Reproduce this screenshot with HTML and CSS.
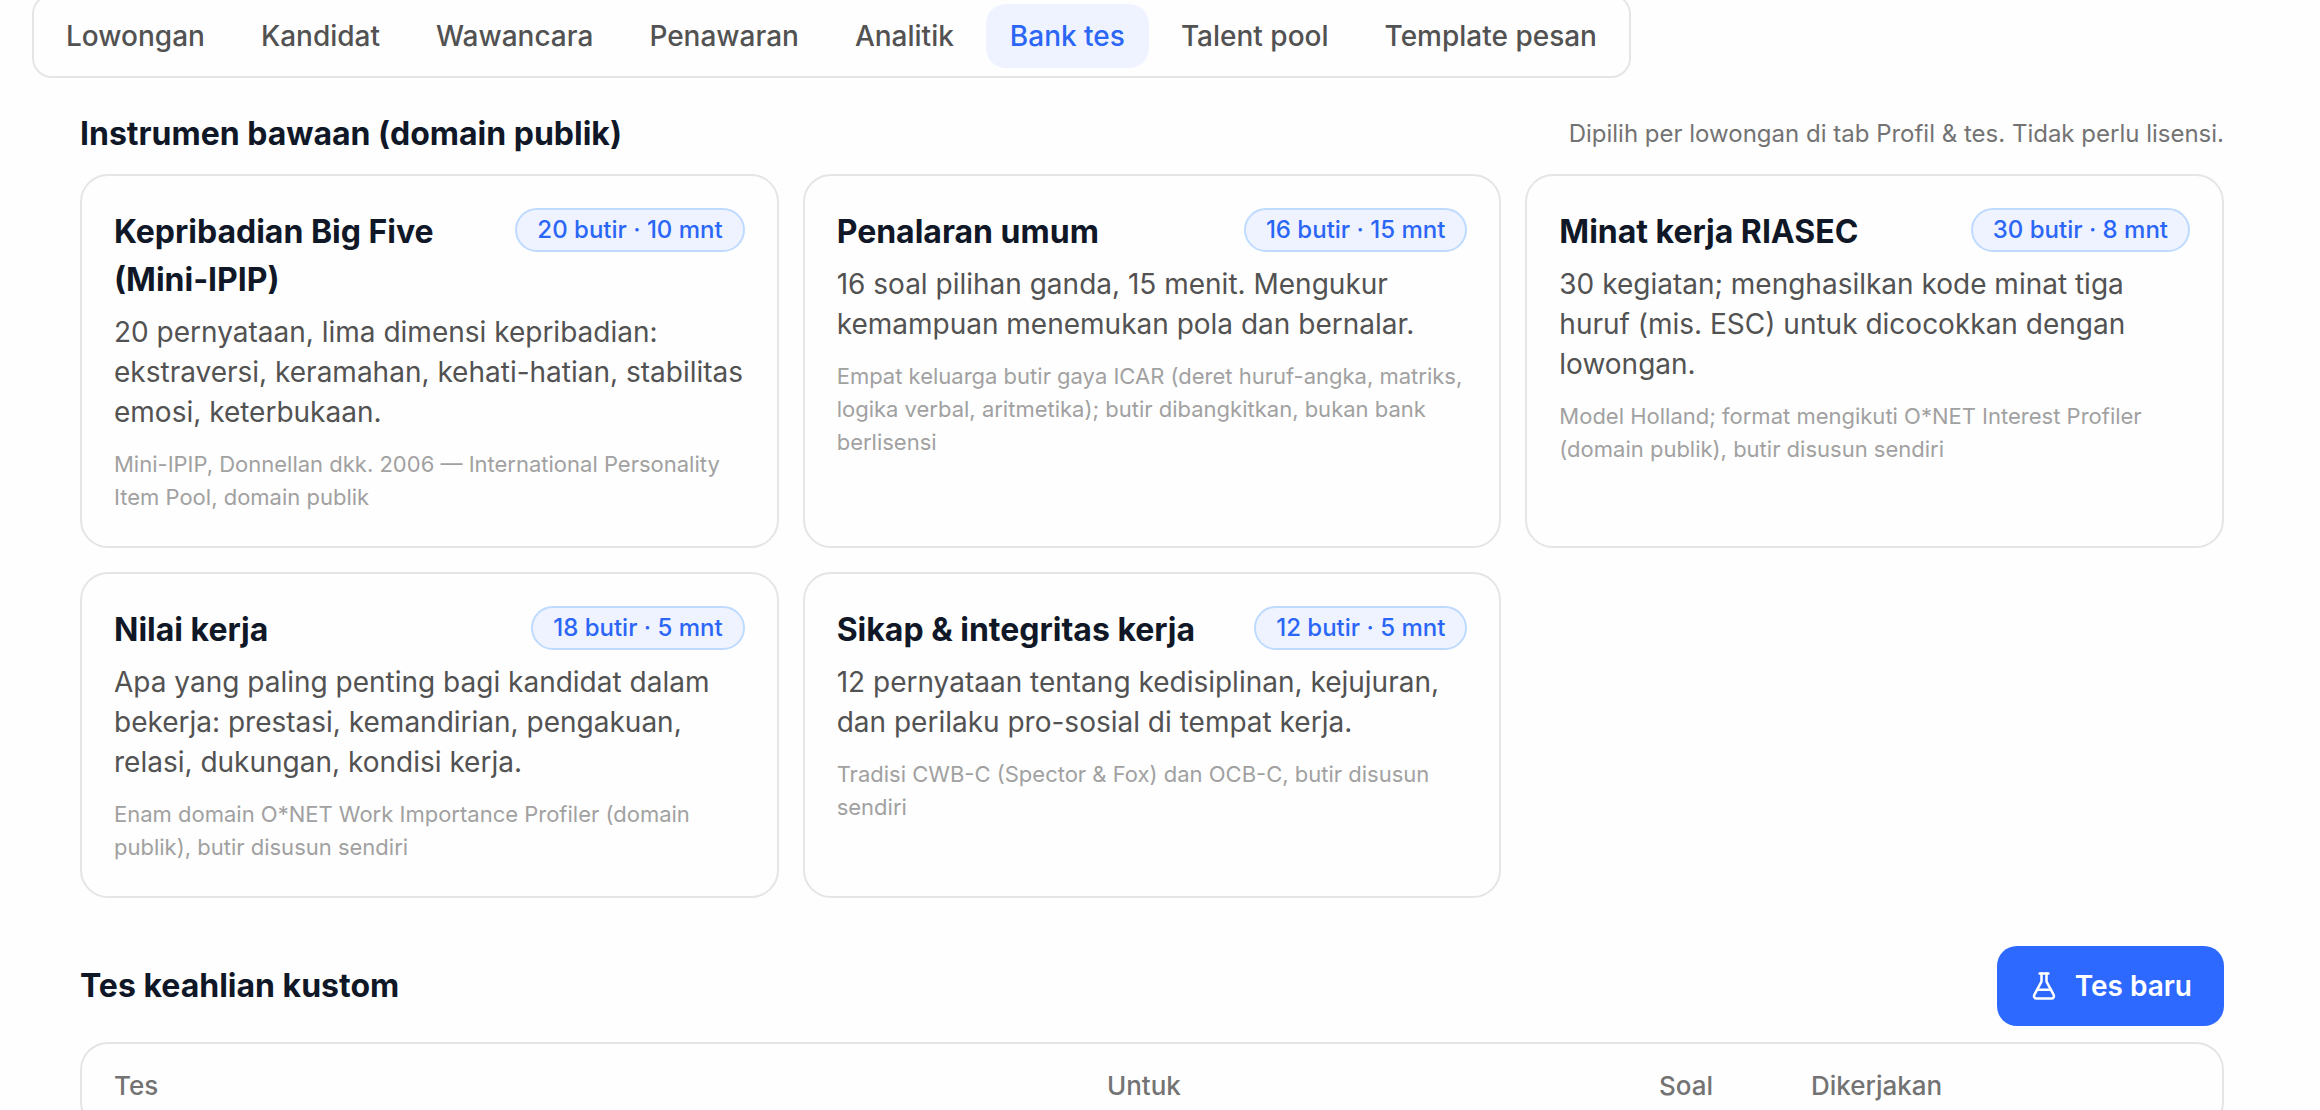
FILE: index.html
```html
<!DOCTYPE html>
<html lang="id">
<head>
<meta charset="utf-8">
<meta name="viewport" content="width=device-width, initial-scale=1">
<title>Bank tes</title>
<link rel="stylesheet" href="styles.css">
</head>
<body>
<nav class="tabs">
  <a class="tab" href="#lowongan">Lowongan</a>
  <a class="tab" href="#kandidat">Kandidat</a>
  <a class="tab" href="#wawancara">Wawancara</a>
  <a class="tab" href="#penawaran">Penawaran</a>
  <a class="tab" href="#analitik">Analitik</a>
  <a class="tab tab-active" href="#bank-tes" aria-current="page">Bank tes</a>
  <a class="tab" href="#talent-pool">Talent pool</a>
  <a class="tab" href="#template-pesan">Template pesan</a>
</nav>
<main class="content">
  <section class="section">
    <header class="section-head">
      <h2 class="heading">Instrumen bawaan (domain publik)</h2>
      <p class="note">Dipilih per lowongan di tab Profil &amp; tes. Tidak perlu lisensi.</p>
    </header>
    <div class="grid">
      <article class="card">
        <div class="card-head">
          <h3 class="heading">Kepribadian Big Five (Mini-IPIP)</h3>
          <span class="badge">20 butir · 10 mnt</span>
        </div>
        <p class="desc">20 pernyataan, lima dimensi kepribadian: ekstraversi, keramahan, kehati-hatian, stabilitas emosi, keterbukaan.</p>
        <p class="source">Mini-IPIP, Donnellan dkk. 2006 — International Personality Item Pool, domain publik</p>
      </article>
      <article class="card">
        <div class="card-head">
          <h3 class="heading">Penalaran umum</h3>
          <span class="badge">16 butir · 15 mnt</span>
        </div>
        <p class="desc">16 soal pilihan ganda, 15 menit. Mengukur kemampuan menemukan pola dan bernalar.</p>
        <p class="source">Empat keluarga butir gaya ICAR (deret huruf-angka, matriks, logika verbal, aritmetika); butir dibangkitkan, bukan bank berlisensi</p>
      </article>
      <article class="card">
        <div class="card-head">
          <h3 class="heading">Minat kerja RIASEC</h3>
          <span class="badge">30 butir · 8 mnt</span>
        </div>
        <p class="desc">30 kegiatan; menghasilkan kode minat tiga huruf (mis. ESC) untuk dicocokkan dengan lowongan.</p>
        <p class="source">Model Holland; format mengikuti O*NET Interest Profiler (domain publik), butir disusun sendiri</p>
      </article>
      <article class="card">
        <div class="card-head">
          <h3 class="heading">Nilai kerja</h3>
          <span class="badge">18 butir · 5 mnt</span>
        </div>
        <p class="desc">Apa yang paling penting bagi kandidat dalam bekerja: prestasi, kemandirian, pengakuan, relasi, dukungan, kondisi kerja.</p>
        <p class="source">Enam domain O*NET Work Importance Profiler (domain publik), butir disusun sendiri</p>
      </article>
      <article class="card">
        <div class="card-head">
          <h3 class="heading">Sikap &amp; integritas kerja</h3>
          <span class="badge">12 butir · 5 mnt</span>
        </div>
        <p class="desc">12 pernyataan tentang kedisiplinan, kejujuran, dan perilaku pro-sosial di tempat kerja.</p>
        <p class="source">Tradisi CWB-C (Spector &amp; Fox) dan OCB-C, butir disusun sendiri</p>
      </article>
    </div>
  </section>
  <section class="section">
    <header class="section-head">
      <h2 class="heading">Tes keahlian kustom</h2>
      <button class="button" type="button">
        <svg class="icon" viewBox="0 0 24 24" aria-hidden="true">
          <path d="M14 2v6a2 2 0 0 0 .245.96l5.51 10.08A2 2 0 0 1 18 22H6a2 2 0 0 1-1.755-2.96l5.51-10.08A2 2 0 0 0 10 8V2"/>
          <path d="M6.453 15h11.094"/>
          <path d="M8.5 2h7"/>
        </svg>
        Tes baru
      </button>
    </header>
    <div class="table-card">
      <table class="table">
        <colgroup>
          <col class="col-test"><col class="col-for"><col class="col-items"><col class="col-done">
        </colgroup>
        <thead>
          <tr><th scope="col">Tes</th><th scope="col">Untuk</th><th scope="col">Soal</th><th scope="col">Dikerjakan</th></tr>
        </thead>
      </table>
    </div>
  </section>
</main>
</body>
</html>
```
FILE: styles.css
```css
* {
  box-sizing: border-box;
}

body {
  margin: 0;
  background: #fefefe;
  color: #525252;
  font-family: Inter, "Liberation Sans", sans-serif;
  font-size: 28px;
  line-height: 40px;
}

h2, h3, p {
  margin: 0;
}

.tabs {
  display: flex;
  gap: 8px;
  width: fit-content;
  margin: -6px 32px 0;
  padding: 8px;
  border: 2px solid #e5e5e5;
  border-radius: 20px;
}

.tab {
  padding: 12px 24px;
  border-radius: 20px;
  color: #525252;
  font-weight: 500;
  text-decoration: none;
  white-space: nowrap;
}

.tab-active {
  background: #eef3ff;
  color: #2b66f6;
}

.content {
  display: flex;
  flex-direction: column;
  gap: 48px;
  padding: 32px 96px 0 80px;
}

.section {
  display: flex;
  flex-direction: column;
  gap: 16px;
}

.section-head {
  display: flex;
  align-items: center;
  justify-content: space-between;
  gap: 24px;
}

.heading {
  color: #101828;
  font-size: 32px;
  font-weight: 700;
  line-height: 48px;
}

.note {
  color: #737373;
  font-size: 24px;
  line-height: 32px;
}

.grid {
  display: grid;
  grid-template-columns: repeat(3, 1fr);
  gap: 24px;
}

.card {
  padding: 32px;
  border: 2px solid #e5e5e5;
  border-radius: 28px;
}

.card-head {
  display: flex;
  align-items: flex-start;
  justify-content: space-between;
  gap: 16px;
}

.badge {
  flex: none;
  padding: 4px 20px;
  border: 2px solid #bedbff;
  border-radius: 22px;
  background: #eef3ff;
  color: #2b66f6;
  font-size: 24px;
  font-weight: 500;
  line-height: 32px;
}

.desc {
  margin-top: 8px;
}

.source {
  margin-top: 16px;
  color: #a1a1a1;
  font-size: 22px;
  line-height: 33px;
}

.button {
  display: flex;
  align-items: center;
  gap: 16px;
  padding: 20px 32px;
  border: 0;
  border-radius: 20px;
  background: #2d68ff;
  color: #fff;
  font: inherit;
  font-weight: 600;
}

.icon {
  width: 30px;
  height: 30px;
  fill: none;
  stroke: currentColor;
  stroke-width: 2;
  stroke-linecap: round;
  stroke-linejoin: round;
}

.table-card {
  border: 2px solid #e5e5e5;
  border-radius: 28px;
}

.table {
  width: 100%;
  table-layout: fixed;
  border-collapse: collapse;
}

.table th {
  padding: 22px 32px;
  color: #737373;
  font-size: 26px;
  font-weight: 500;
  line-height: 40px;
  text-align: left;
  white-space: nowrap;
}

.col-test {
  width: 46.4%;
}

.col-for {
  width: 25.8%;
}

.col-items {
  width: 7.1%;
}
```
